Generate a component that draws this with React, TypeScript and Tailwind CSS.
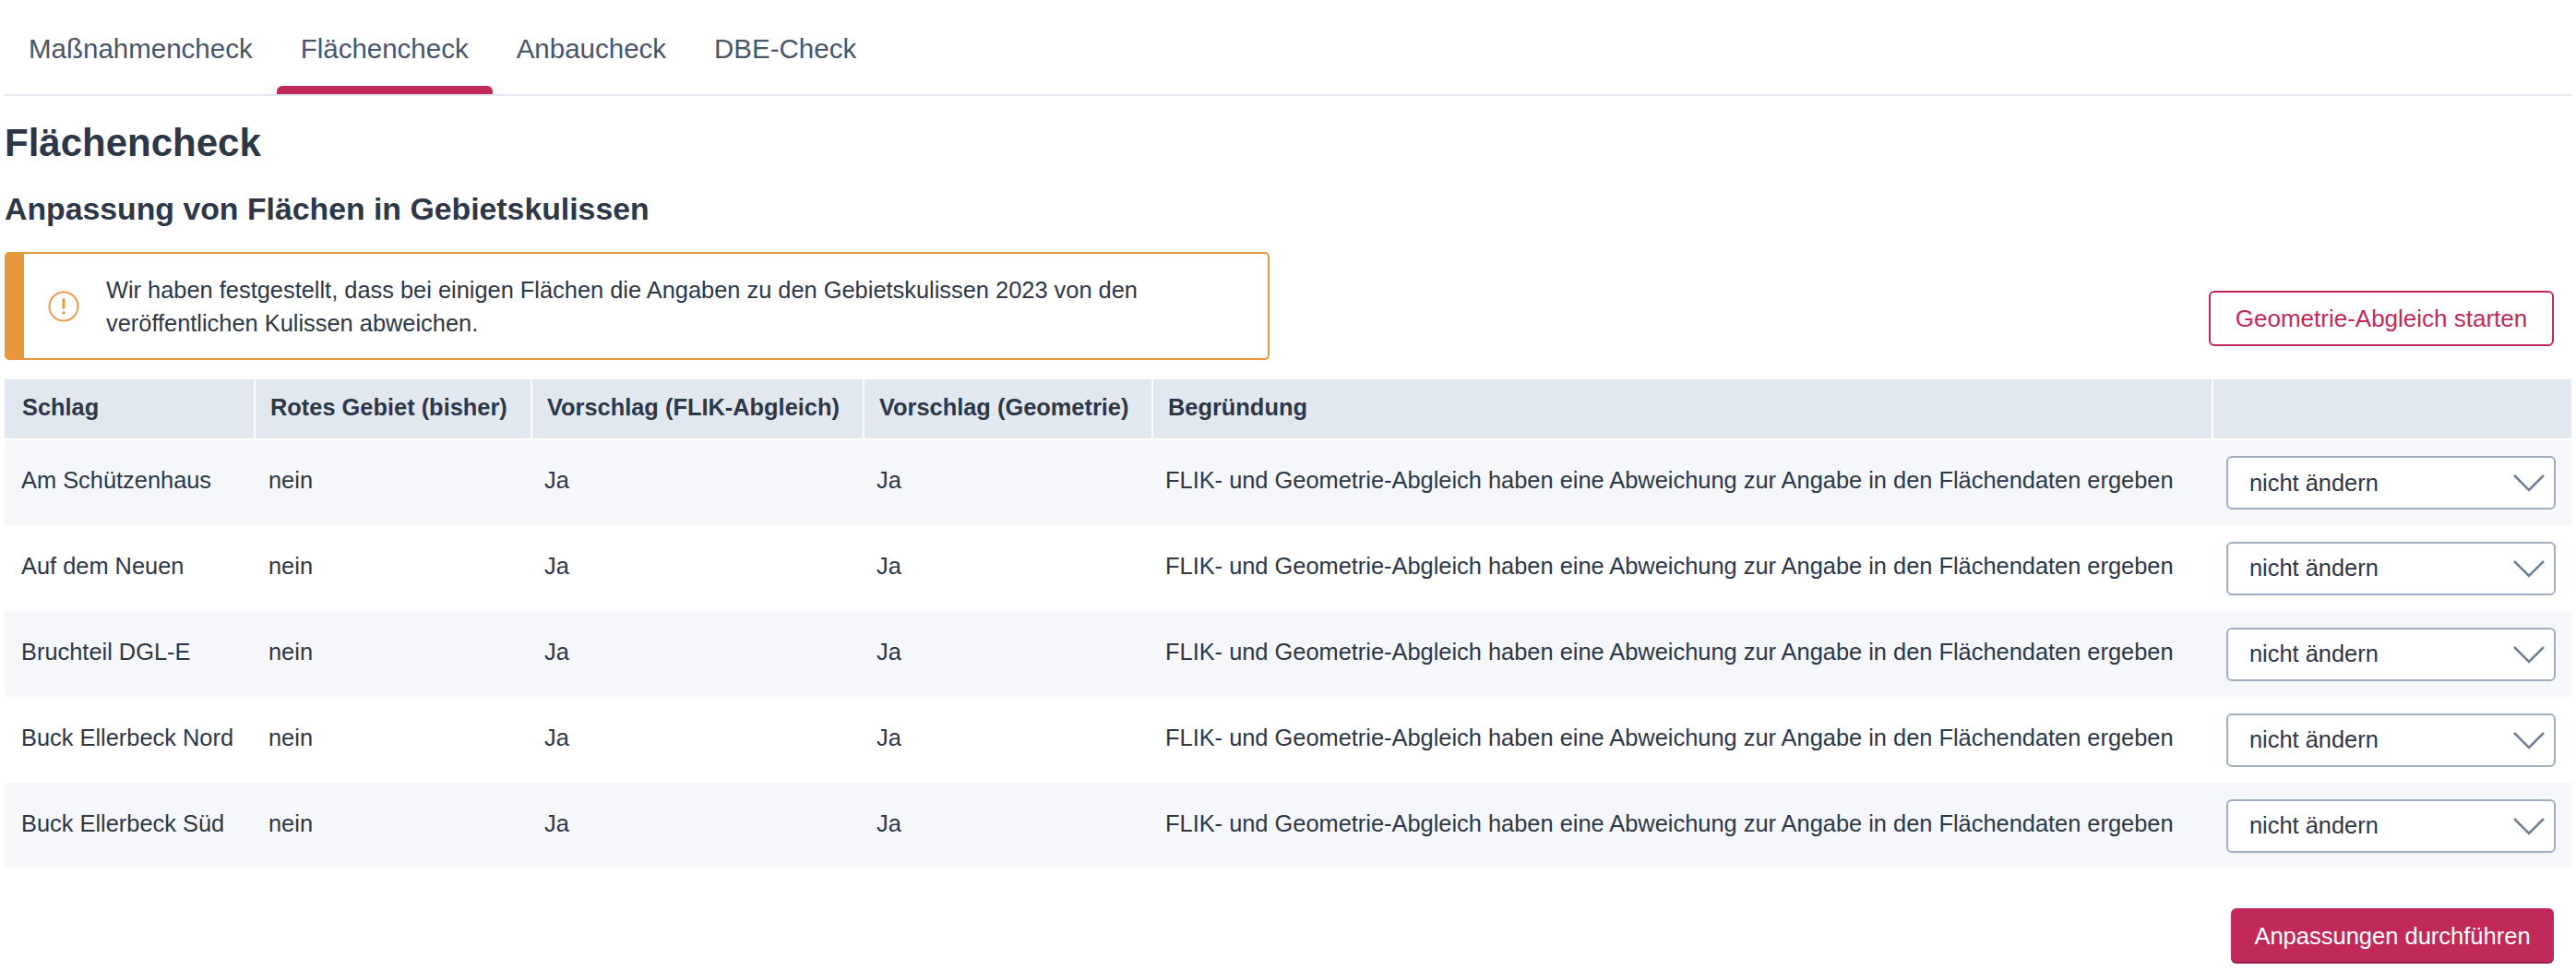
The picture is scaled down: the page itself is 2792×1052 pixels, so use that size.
import React from 'react';

const tabs = ['Maßnahmencheck', 'Flächencheck', 'Anbaucheck', 'DBE-Check'];

const rows = ['Am Schützenhaus', 'Auf dem Neuen', 'Bruchteil DGL-E', 'Buck Ellerbeck Nord', 'Buck Ellerbeck Süd'];

const headers = ['Schlag', 'Rotes Gebiet (bisher)', 'Vorschlag (FLIK-Abgleich)', 'Vorschlag (Geometrie)', 'Begründung', ''];

const reason = 'FLIK- und Geometrie-Abgleich haben eine Abweichung zur Angabe in den Flächendaten ergeben';

const App: React.FC = () => {
  return (
    <div className="min-h-[1052px] bg-white px-[5px] font-['Liberation_Sans',Arial,sans-serif] text-[25.4px] text-[#2d3748]">
      <div className="flex h-[104px] items-stretch border-b-2 border-[#e2e8f0]">
        {tabs.map((tab) => (
          <div key={tab} className="relative px-[26px] pt-[35px] text-[29.5px] leading-[36px] text-[#4a5568]">
            {tab}
            {tab === 'Flächencheck' && (
              <span className="absolute bottom-0 left-0 right-0 h-[9px] rounded-t-[6px] bg-[#c12a58]" />
            )}
          </div>
        ))}
      </div>

      <h1 className="mt-[27px] text-[42px] font-bold leading-[48px] text-[#2d3748]">Flächencheck</h1>
      <h2 className="mt-[26px] text-[33.8px] font-bold leading-[42px] text-[#2d3748]">
        Anpassung von Flächen in Gebietskulissen
      </h2>

      <div className="mt-[26px] flex items-end justify-between pr-[19px]">
        <div className="flex h-[117px] w-[1371px] items-center rounded-[5px] border-2 border-l-[21px] border-[#e8983c]">
          <svg className="ml-[26px] h-[34px] w-[34px] shrink-0" viewBox="0 0 34 34" fill="none">
            <circle cx="17" cy="17" r="15.5" stroke="#ec9c52" strokeWidth="2" />
            <path d="M17 8.5v11" stroke="#e8983c" strokeWidth="3" />
            <path d="M17 22.5v3" stroke="#e8983c" strokeWidth="3" />
          </svg>
          <p className="ml-[29px] w-[1200px] leading-[36px] text-[#2d3748]">
            Wir haben festgestellt, dass bei einigen Flächen die Angaben zu den Gebietskulissen 2023 von den veröffentlichen Kulissen abweichen.
          </p>
        </div>
        <button className="mb-[15px] h-[60px] w-[374px] rounded-[6px] border-2 border-[#c12a58] text-center text-[26px] text-[#c12a58]">
          Geometrie-Abgleich starten
        </button>
      </div>

      <table className="mt-[21px] w-full table-fixed border-collapse text-left">
        <colgroup>
          <col className="w-[271px]" />
          <col className="w-[300px]" />
          <col className="w-[360px]" />
          <col className="w-[313px]" />
          <col className="w-[1149px]" />
          <col className="w-[389px]" />
        </colgroup>
        <thead>
          <tr className="h-[65px] border-b-2 border-white bg-[#e2e8f0]">
            {headers.map((header, i) => (
              <th key={i} className="border-r-2 border-white pb-[4px] pl-[16px] font-bold first:pl-[19px] last:border-r-0">
                {header}
              </th>
            ))}
          </tr>
        </thead>
        <tbody>
          {rows.map((row, i) => (
            <tr key={row} className={`h-[93px] ${i % 2 === 0 ? 'bg-[#f5f7fa]' : 'bg-white'}`}>
              <td className="pb-[5px] pl-[18px] whitespace-nowrap">{row}</td>
              <td className="pb-[5px] pl-[15px]">nein</td>
              <td className="pb-[5px] pl-[14px]">Ja</td>
              <td className="pb-[5px] pl-[14px]">Ja</td>
              <td className="pb-[5px] pl-[14px] whitespace-nowrap">{reason}</td>
              <td className="pl-[15px]">
                <div className="flex h-[58px] w-[357px] items-center justify-between rounded-[6px] border-2 border-[#a0aec0] bg-white pl-[23px] pr-[10px]">
                  <span>nicht ändern</span>
                  <svg className="h-[20px] w-[34px]" viewBox="0 0 34 20" fill="none">
                    <path d="M1 2l16 16L33 2" stroke="#718096" strokeWidth="2.5" />
                  </svg>
                </div>
              </td>
            </tr>
          ))}
        </tbody>
      </table>

      <div className="mt-[43px] flex justify-end pr-[19px]">
        <button className="h-[60px] w-[350px] rounded-[6px] border-b-2 border-[#9b1f46] bg-[#c12a58] pt-[3px] text-center text-[25.5px] text-white">
          Anpassungen durchführen
        </button>
      </div>
    </div>
  );
};

export default App;
